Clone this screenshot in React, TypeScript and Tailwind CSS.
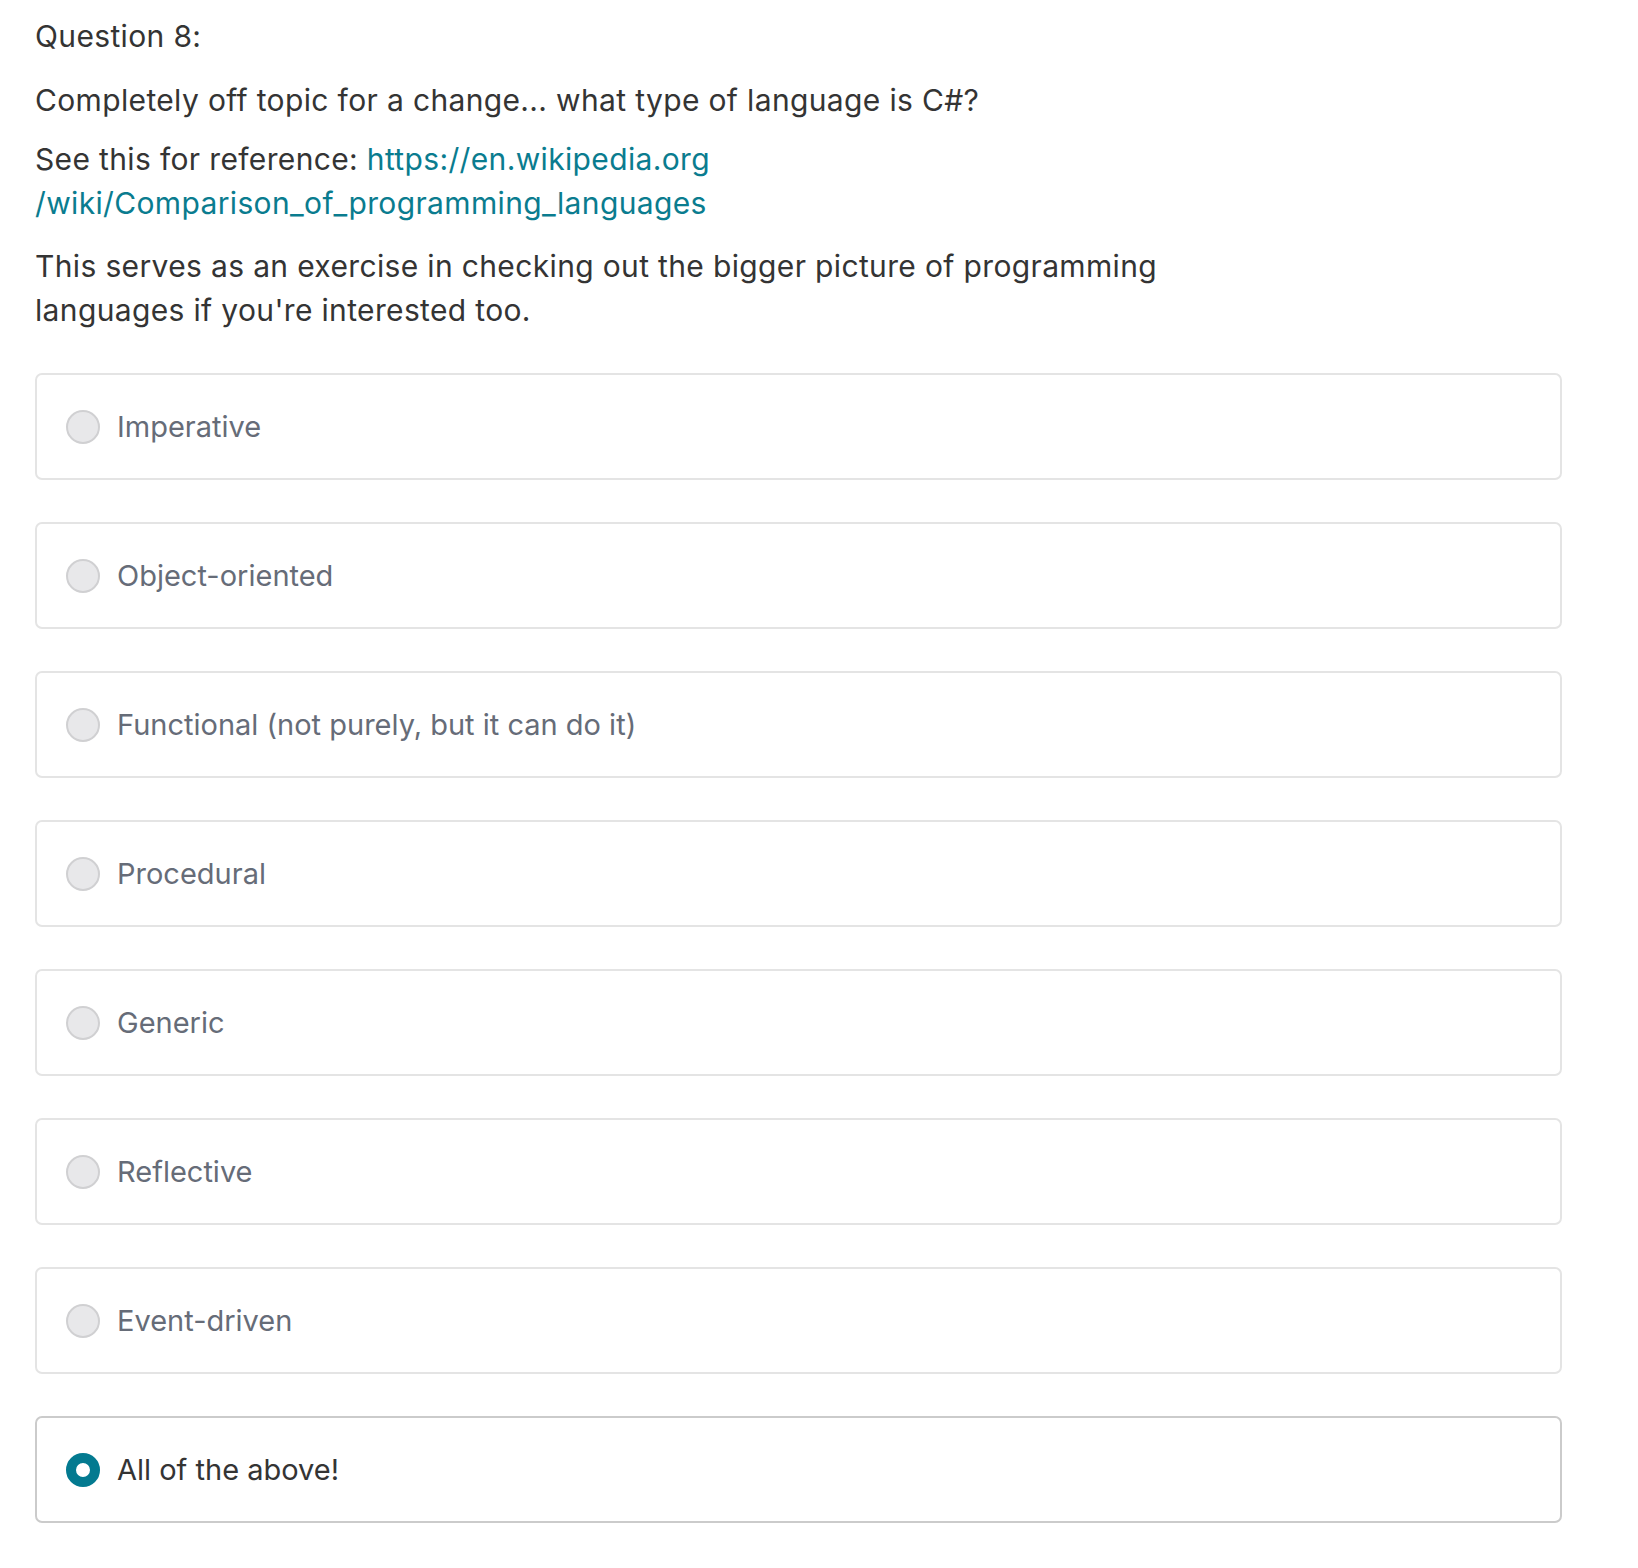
import React from "react";

const options = [
  "Imperative",
  "Object-oriented",
  "Functional (not purely, but it can do it)",
  "Procedural",
  "Generic",
  "Reflective",
  "Event-driven",
  "All of the above!",
];

const selected = 7;

export default function App() {
  return (
    <div
      className="min-h-[1568px] w-[1638px] bg-white pl-[35px] pt-[14px] text-[30px] leading-[44px] text-[#343434]"
      style={{ fontFamily: "Inter, 'Noto Sans', sans-serif" }}
    >
      <div className="max-w-[1190px] tracking-[0.35px]">
        <p>Question 8:</p>
        <p className="mt-[20px]">Completely off topic for a change... what type of language is C#?</p>
        <p className="mt-[15px]">
          See this for reference:{" "}
          <a href="#" className="text-[#0a7c8f]">
            https://en.wikipedia.org
            <wbr />
            /wiki/Comparison_of_programming_languages
          </a>
        </p>
        <p className="mt-[19px]">
          This serves as an exercise in checking out the bigger picture of programming languages if you're
          interested too.
        </p>
      </div>
      <div className="mt-[41px] flex w-[1527px] flex-col gap-[42px] pb-[40px]">
        {options.map((opt, i) => {
          const isSel = i === selected;
          return (
            <label
              key={opt}
              className={
                isSel
                  ? "flex h-[107px] items-center rounded-[7px] border-2 border-[#cbcbcb] bg-white pl-[29px]"
                  : "flex h-[107px] items-center rounded-[7px] border-2 border-[#e4e4e4] bg-white pl-[29px]"
              }
            >
              {isSel ? (
                <span className="box-border h-[34px] w-[34px] shrink-0 rounded-full border-[10px] border-[#037a90] bg-white" />
              ) : (
                <span className="box-border h-[34px] w-[34px] shrink-0 rounded-full border-2 border-[#d0d0d2] bg-[#e8e8ea]" />
              )}
              <span
                className={
                  isSel
                    ? "ml-[17px] text-[29px] text-[#343434]"
                    : "ml-[17px] text-[29px] text-[#666c78]"
                }
              >
                {opt}
              </span>
            </label>
          );
        })}
      </div>
    </div>
  );
}
